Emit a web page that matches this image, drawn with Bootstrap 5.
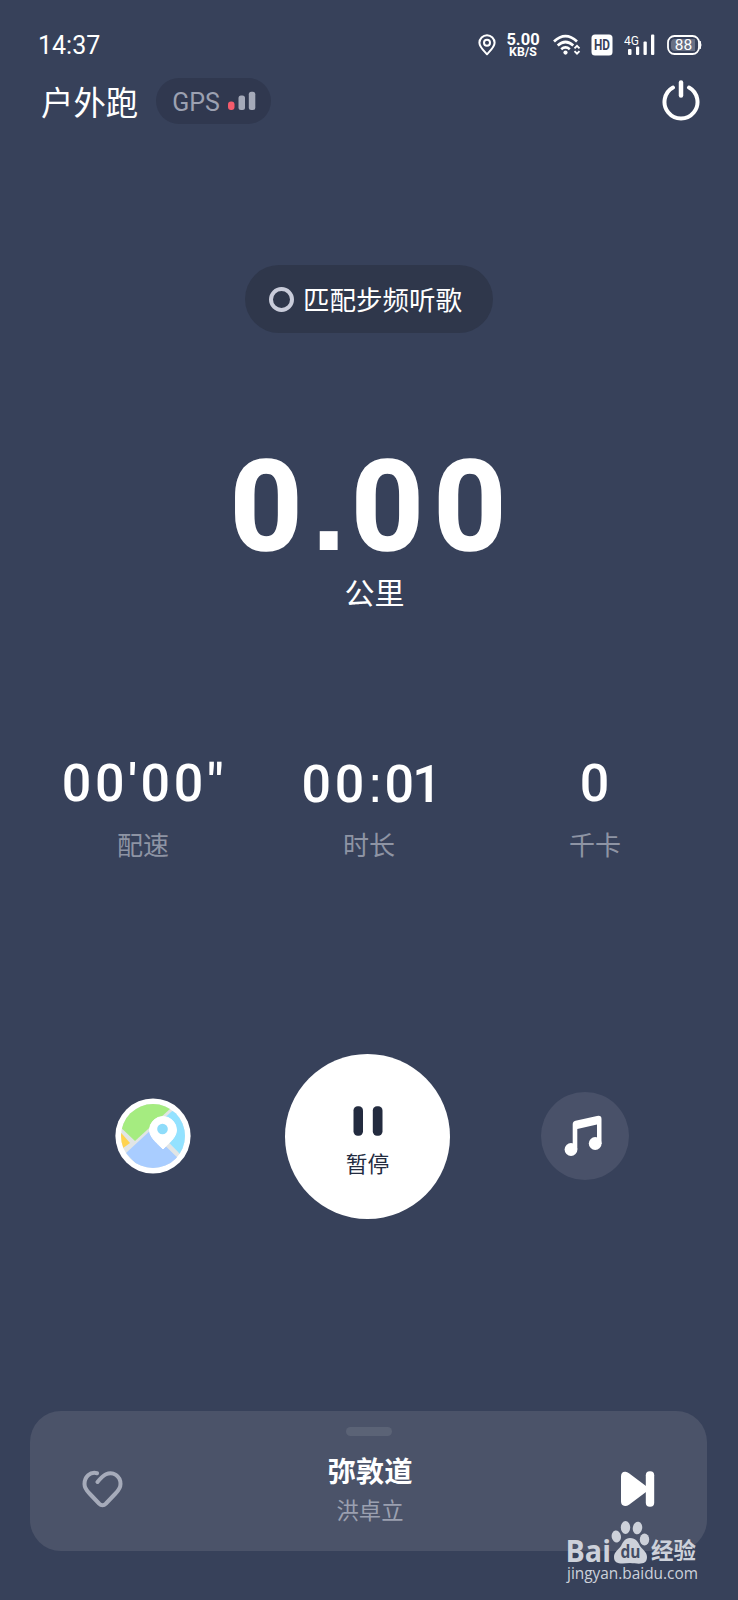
<!DOCTYPE html>
<html lang="zh-CN">
<head>
<meta charset="utf-8">
<meta name="viewport" content="width=device-width, initial-scale=1">
<title>户外跑</title>
<link href="https://cdn.jsdelivr.net/npm/bootstrap@5.3.0/dist/css/bootstrap.min.css" rel="stylesheet">
<style>
body { background: #37415a; color: #fff; font-family: Roboto, "Noto Sans CJK SC", sans-serif; }
svg { display: block; flex: none; }
.screen { width: 738px; height: 1600px; overflow: hidden; }
.statusbar { height: 28px; margin-top: 31px; padding: 0 36px 0 38px; }
.clock { font-size: 25px; line-height: 28px; padding-top: 2px; }
.speed { width: 34px; font-weight: 700; font-size: 16.5px; line-height: 13px; margin: 1px 13px 0 10px; }
.speed small { display: block; font-size: 12.3px; line-height: 12px; font-weight: 700; }
.topbar { height: 46px; margin-top: 19px; padding: 0 38px 0 41px; }
.mode { font-size: 32.4px; line-height: 46px; padding-top: 5px; }
.gps { width: 115px; height: 46px; margin-left: 18px; padding-left: 16px; background: #30384f; color: #9ca1b1; font-size: 25px; line-height: 46px; }
.gps span { padding-top: 3px; }
.match { width: 248px; height: 68px; margin: 141px auto 0; padding-left: 24px; background: #2f374b; font-size: 26.5px; }
.match .label { padding-top: 4px; }
.ring { width: 25px; height: 25px; border: 4.5px solid #c9ccda; margin-right: 9px; }
.distance { height: 110px; margin-top: 119px; font-size: 126px; line-height: 110px; font-weight: 700; letter-spacing: 10px; padding-left: 8px; -webkit-text-stroke: 1.6px #fff; }
.distance .point { font-family: "Liberation Sans", sans-serif; letter-spacing: 5px; margin-left: -1px; -webkit-text-stroke: 0; }
.unit { font-size: 30px; line-height: 40px; margin-top: 12px; padding-left: 11px; }
.stats { margin: 138px 30px 0; }
.value { font-size: 52px; line-height: 64px; font-weight: 500; letter-spacing: 3.7px; height: 64px; padding-left: 3px; }
.value.elapsed { padding-left: 9px; }
.value .tight { letter-spacing: -2px; }
.value .colon { font-family: "Liberation Sans", sans-serif; letter-spacing: 2px; }
.caption-text { font-size: 26px; line-height: 36px; margin-top: 12px; color: #8e94a4; }
.controls { height: 166px; margin-top: 189px; padding: 0 109px 0 115px; }
.pause { width: 165px; height: 165px; background: #fff; color: #232b3f; padding: 52px 0 0; margin-left: 3px; }
.pause span { font-size: 21.7px; line-height: 28px; margin-top: 15px; }
.music { width: 88px; height: 88px; background: #495169; }
.player { width: 677px; height: 140px; margin: 192px 0 0 30px; border-radius: 31px; background: #4b5369; padding: 0 51px 0 52px; }
.handle { width: 46px; height: 9px; background: #5b6376; margin-top: 16px; }
.song { font-size: 28.3px; line-height: 36px; font-weight: 700; margin-top: 19px; padding-left: 2px; }
.artist { font-size: 22.3px; line-height: 30px; color: #9ba0b0; margin-top: 5px; padding-left: 2px; }
.watermark { left: 564px; top: 1518px; width: 150px; color: #cdd1da; }
.watermark svg { width: 150px; height: 72px; }
</style>
</head>
<body>
<main class="screen position-relative">
  <header class="statusbar d-flex align-items-center justify-content-between">
    <div class="clock">14:37</div>
    <div class="d-flex align-items-center">
      <svg width="18" height="22" viewBox="0 0 18 22" fill="none" stroke="#fff" stroke-width="2"><path d="M9 20.2C5.500 16.500 1.400 13 1.400 8.800a7.600 7.600 0 0 1 15.200 0C16.600 13 12.500 16.500 9 20.200Z" stroke-linejoin="round"/><circle cx="9" cy="8.800" r="3"/></svg>
      <div class="speed text-center">5.00<small>KB/S</small></div>
      <svg width="28" height="22" viewBox="0 0 28 22" fill="none" stroke="#fff" stroke-width="2.700"><path d="M1 7.500Q12.500-3.300 24 7.500M4.700 11.500q7.800-7 15.600 0M8.200 15.200q4.300-3.600 8.600 0"/><circle cx="12.500" cy="18.600" r="2.100" fill="#fff" stroke="none"/><path d="m21.500 14.400 2.500-2.500 2.500 2.500M21.500 17.200l2.500 2.500 2.500-2.500" stroke-width="1.900"/></svg>
      <svg style="margin-left:10px" width="22" height="22" viewBox="0 0 22 22"><rect x=".5" y=".5" width="21" height="21" rx="3.500" fill="#fff"/><text x="3" y="16" font-size="14" font-weight="700" textLength="16" lengthAdjust="spacingAndGlyphs" fill="#37415a">HD</text></svg>
      <svg style="margin-left:11px" width="31" height="22" viewBox="0 0 31 22" fill="#fff"><text x="0" y="10.500" font-size="12.500" textLength="15" lengthAdjust="spacingAndGlyphs">4G</text><rect x="4" y="15" width="3.500" height="6" rx="1"/><rect x="12" y="12.500" width="3.200" height="8.500" rx="1"/><rect x="19.500" y="7.500" width="3.300" height="13.500" rx="1"/><rect x="27" y=".5" width="3.300" height="20.500" rx="1"/></svg>
      <svg style="margin-left:12px" width="35" height="20" viewBox="0 0 35 20"><rect x="1" y="1" width="31" height="18" rx="6.500" fill="none" stroke="#fff" stroke-width="1.800"/><path d="M8 4h20v12H8a4 4 0 0 1-4-4V8a4 4 0 0 1 4-4Z" fill="#687084"/><path d="M33 6q2 4 0 8Z" fill="#fff" stroke="#fff"/><text x="16.500" y="15.400" text-anchor="middle" font-size="15.500" fill="#fff">88</text></svg>
    </div>
  </header>

  <section class="topbar d-flex align-items-center">
    <div class="mode">户外跑</div>
    <div class="gps rounded-pill d-flex align-items-center"><span>GPS</span>
      <svg style="margin-left:8px" width="28" height="20" viewBox="0 0 28 20"><rect y="10.500" width="6.500" height="8.500" rx="3" fill="#f45b6c"/><rect x="10.500" y="4.500" width="6.500" height="14.500" rx="2.500" fill="#a5aab9"/><rect x="20.800" y=".8" width="6.500" height="18.200" rx="2.500" fill="#a5aab9"/></svg>
    </div>
    <svg class="ms-auto" width="38" height="42" viewBox="0 0 38 42" fill="none" stroke="#fff" stroke-width="4" stroke-linecap="round"><path d="M11 7.600a16.500 16.500 0 1 0 16 0"/><path d="M19 2.500v13" stroke-width="4.500"/></svg>
  </section>

  <div class="match rounded-pill d-flex align-items-center"><span class="ring rounded-circle"></span><span class="label">匹配步频听歌</span></div>

  <div class="distance text-center">0<span class="point">.</span>00</div>
  <div class="unit text-center">公里</div>

  <section class="stats row g-0 text-center">
    <div class="col"><div class="value">00'00"</div><div class="caption-text">配速</div></div>
    <div class="col"><div class="value elapsed">00<span class="colon">:</span><span class="tight">0</span>1</div><div class="caption-text">时长</div></div>
    <div class="col"><div class="value">0</div><div class="caption-text">千卡</div></div>
  </section>

  <section class="controls d-flex align-items-center justify-content-between">
    <svg width="76" height="76" viewBox="0 0 76 76"><defs><clipPath id="disc"><circle cx="38" cy="38" r="32"/></clipPath></defs><circle cx="38" cy="38" r="37.600" fill="#fff"/><g clip-path="url(#disc)"><path d="M0 0h76v76H0Z" fill="#e1e5e5"/><path d="M0 24 20 43 56 10 46 0H0Z" fill="#a5ec80"/><path d="M56 14 38 31 65 56 76 45V0Z" fill="#93e2ff"/><path d="M38 30 11 55 30 76h25l8-16-25-24Z" fill="#a9cdff"/><path d="M0 28v28l15-11Z" fill="#ffd34f"/></g><path d="M38 31 62 56" stroke="#e1e5e5" stroke-width="4"/><path d="M48 51C43 46 34.500 39.500 34.500 32a13.500 13.500 0 0 1 27 0C61.500 39.500 53 46 48 51Z" fill="#fff" stroke="#fff" stroke-linejoin="round"/><circle cx="47.500" cy="31" r="5.300" fill="#8edcfa"/></svg>
    <div class="pause rounded-circle d-flex flex-column align-items-center">
      <svg width="30" height="30" viewBox="0 0 30 30" fill="currentColor"><rect x=".5" y=".3" width="9.500" height="29.400" rx="4.200"/><rect x="19.800" y=".3" width="9.700" height="29.400" rx="4.200"/></svg>
      <span>暂停</span>
    </div>
    <div class="music rounded-circle d-flex align-items-center justify-content-center">
      <svg class="me-1" width="38" height="42" viewBox="0 0 38 42" fill="#fff"><path d="M8.700 34V9.500Q8.700 6.500 11.500 5.800L33 .9Q37.500 0 37.500 4V29H33V9.500L13.300 14V34Z"/><circle cx="7" cy="34.500" r="6.400"/><circle cx="31.200" cy="28.500" r="6.400"/></svg>
    </div>
  </section>

  <section class="player d-flex justify-content-between">
    <svg style="margin-top:59px" width="41" height="38" viewBox="0 0 41 38" fill="none" stroke="#a6abba" stroke-width="4" stroke-linecap="round" stroke-linejoin="round"><path d="M15 3.200C8 1.500 2.500 7 2.500 14c0 4 2 6.500 5 9.500l9.500 10q3.500 3.500 7 0l9.500-10c3-3 5-5.500 5-9.500 0-8-7.500-13-14.500-9.700C20.500 6 18 9 15.500 12"/></svg>
    <div class="d-flex flex-column align-items-center">
      <div class="handle rounded-pill"></div>
      <div class="song">弥敦道</div>
      <div class="artist">洪卓立</div>
    </div>
    <svg style="margin-top:60px" width="41" height="36" viewBox="0 0 41 36" fill="#fff"><path d="M6 5.500Q6 1 10 .8q2-.2 4 1.500L31 15V21L14 33.700q-2 1.500-4 1.400Q6 34.500 6 30.500Z"/><rect x="30.800" y=".2" width="8.400" height="35.600" rx="4"/></svg>
  </section>

  <div class="watermark position-absolute">
    <svg viewBox="0 0 150 72" fill="currentColor">
      <text x="1.500" y="43.700" font-family="Open Sans" font-size="30" font-weight="700" textLength="45.500" lengthAdjust="spacingAndGlyphs">Bai</text>
      <ellipse cx="52.300" cy="18.500" rx="4.700" ry="6" transform="rotate(-10 52.300 18.500)"/><ellipse cx="61.500" cy="9.500" rx="4.700" ry="6.500"/><ellipse cx="73.500" cy="10" rx="4.700" ry="6.300" transform="rotate(10 73.500 10)"/><ellipse cx="80.500" cy="21.500" rx="4.700" ry="6"/>
      <path d="M66 20c6 0 8 4 10 8 3 4 7 6 7 11 0 8-7 7-17 6-10 1-16 1-16-6 0-5 4-7 7-11 2-4 4-8 9-8Z"/>
      <text x="56.500" y="39.500" font-family="Open Sans" font-size="18" font-weight="700" textLength="20" lengthAdjust="spacingAndGlyphs" fill="#434d64">du</text>
      <text x="87" y="41" font-family="Noto Sans CJK SC" font-size="22.500" font-weight="700">经验</text>
      <text x="3" y="61" font-family="Open Sans" font-size="16" textLength="131" lengthAdjust="spacingAndGlyphs">jingyan.baidu.com</text>
    </svg>
  </div>
</main>
<script src="https://cdn.jsdelivr.net/npm/bootstrap@5.3.0/dist/js/bootstrap.bundle.min.js"></script>
</body>
</html>
